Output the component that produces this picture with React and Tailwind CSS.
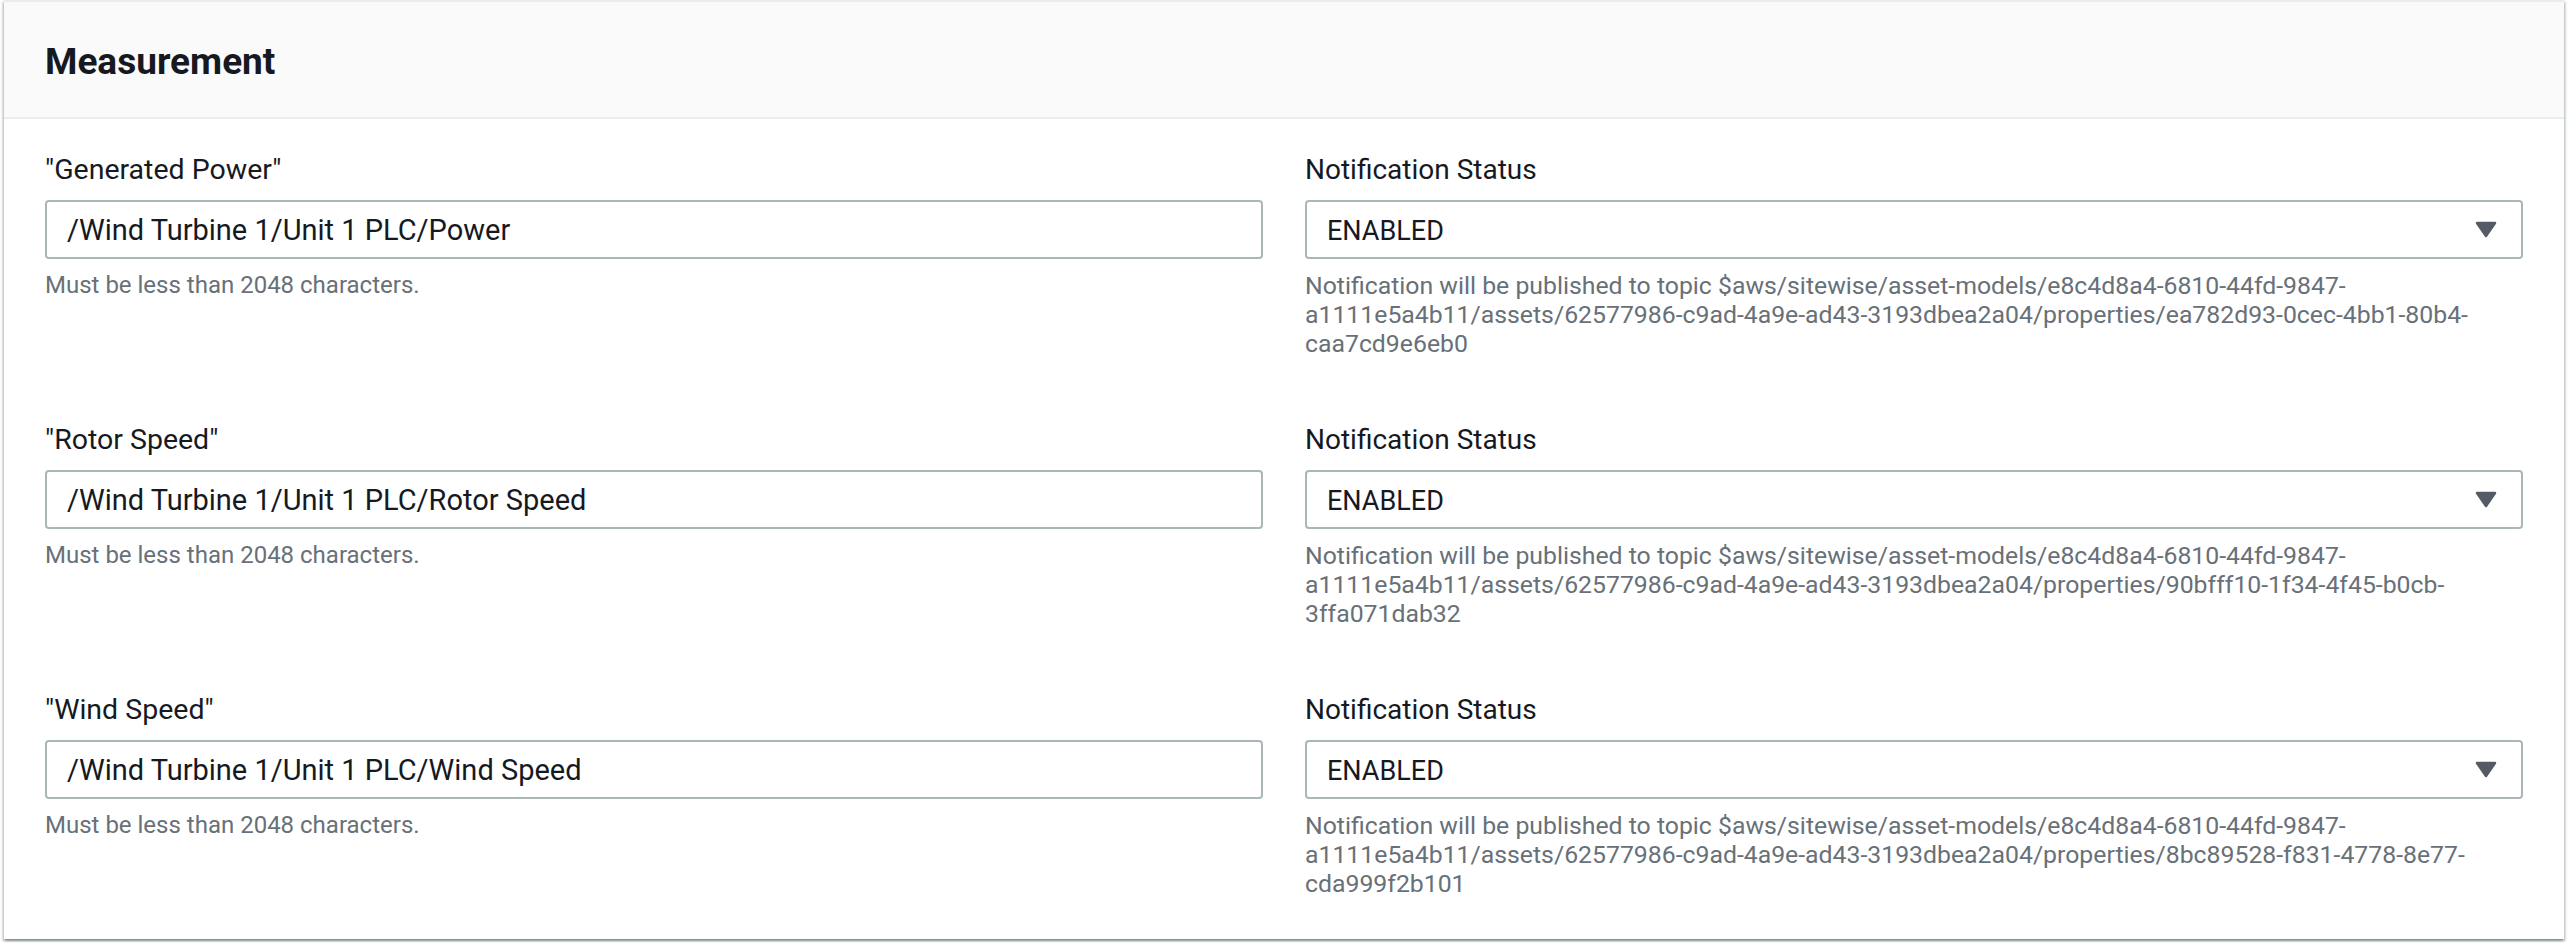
import React from "react";

const PREFIX1 =
  "Notification will be published to topic $aws/sitewise/asset-models/e8c4d8a4-6810-44fd-9847-";
const PREFIX2 =
  "a1111e5a4b11/assets/62577986-c9ad-4a9e-ad43-3193dbea2a04/properties/";

const rows = [
  {
    label: '"Generated Power"',
    value: "/Wind Turbine 1/Unit 1 PLC/Power",
    lines: [PREFIX1, PREFIX2 + "ea782d93-0cec-4bb1-80b4-", "caa7cd9e6eb0"],
  },
  {
    label: '"Rotor Speed"',
    value: "/Wind Turbine 1/Unit 1 PLC/Rotor Speed",
    lines: [PREFIX1, PREFIX2 + "90bfff10-1f34-4f45-b0cb-", "3ffa071dab32"],
  },
  {
    label: '"Wind Speed"',
    value: "/Wind Turbine 1/Unit 1 PLC/Wind Speed",
    lines: [PREFIX1, PREFIX2 + "8bc89528-f831-4778-8e77-", "cda999f2b101"],
  },
];

function Caret() {
  return (
    <svg width="22" height="17" viewBox="0 0 22 17" aria-hidden="true">
      <path
        d="M2 2 H20 L11 15 Z"
        fill="#545b64"
        stroke="#545b64"
        strokeWidth="2.5"
        strokeLinejoin="round"
      />
    </svg>
  );
}

function Row({ row }) {
  return (
    <div className="grid grid-cols-2 gap-x-[42px] items-start">
      <div className="flex flex-col">
        <div className="text-[28.5px] leading-[36px] text-[#16191f]">{row.label}</div>
        <div className="mt-[12px] h-[59px] rounded-[4px] border-2 border-[#aab7b8] bg-white flex items-center pl-[20px] pt-[3px] text-[29px] text-[#16191f]">
          {row.value}
        </div>
        <div className="mt-[12px] text-[24px] leading-[29px] text-[#687078]">
          Must be less than 2048 characters.
        </div>
      </div>
      <div className="flex flex-col">
        <div className="text-[28px] leading-[36px] text-[#16191f]">Notification Status</div>
        <div className="mt-[12px] h-[59px] rounded-[4px] border-2 border-[#aab7b8] bg-white flex items-center justify-between pl-[20px] pr-[24px] text-[27px] text-[#16191f]">
          <span className="pt-[4px]">ENABLED</span>
          <Caret />
        </div>
        <div className="mt-[12px] text-[24.8px] leading-[29px] text-[#687078]">
          {row.lines.map((l, i) => (
            <div key={i} className="whitespace-nowrap">
              {l}
            </div>
          ))}
        </div>
      </div>
    </div>
  );
}

export default function App() {
  return (
    <div
      className="w-[2568px] h-[944px] bg-white px-[4px] pb-[4px]"
      style={{ fontFamily: "Roboto, 'Open Sans', sans-serif" }}
    >
      <div className="bg-white border-t-2 border-[#eaeded] shadow-[0_2px_2px_0_rgba(0,28,36,0.3),2px_2px_2px_0_rgba(0,28,36,0.15),-2px_2px_2px_0_rgba(0,28,36,0.15)]">
        <div className="h-[117px] bg-[#fafafa] border-b-2 border-[#eaeded] flex items-center pl-[41px] pt-[4px]">
          <h2 className="text-[37px] font-bold text-[#16191f] leading-none">Measurement</h2>
        </div>
        <div className="pl-[41px] pr-[41px] pt-[33px] pb-[41px] flex flex-col gap-[64px]">
          {rows.map((r, i) => (
            <Row key={i} row={r} />
          ))}
        </div>
      </div>
    </div>
  );
}
